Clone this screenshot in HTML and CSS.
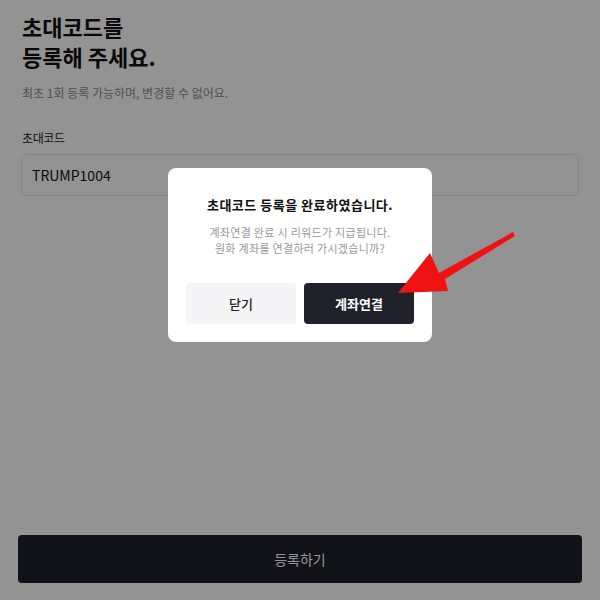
FILE: index.html
```html
<!DOCTYPE html>
<html>
	<head>
		<meta charset="utf-8">
		<title>초대코드 등록</title>
		<link rel="stylesheet" href="styles.css">
	</head>
	<body>

		<div class="page">
			<h1 class="page-title">초대코드를<br>등록해 주세요.</h1>
			<p class="page-desc">최초 1회 등록 가능하며, 변경할 수 없어요.</p>

			<label class="field-label">초대코드</label>
			<div class="field-input">TRUMP1004</div>

			<button class="submit-btn">등록하기</button>
		</div>

		<!-- 완료 팝업 -->
		<div class="dim">
			<div class="modal">
				<p class="modal-title">초대코드 등록을 완료하였습니다.</p>
				<p class="modal-desc">계좌연결 완료 시 리워드가 지급됩니다.<br>원화 계좌를 연결하러 가시겠습니까?</p>
				<div class="modal-btns">
					<button class="modal-btn modal-btn-close">닫기</button>
					<button class="modal-btn modal-btn-ok">계좌연결</button>
				</div>
			</div>
		</div>

		<svg class="arrow" width="600" height="600" viewBox="0 0 600 600">
			<polygon points="398,293 430,253 439,273 513,232 515,236 445,279 448,291" fill="#f01212"/>
		</svg>

	</body>
</html>
```

FILE: styles.css
```css
*{
	box-sizing: border-box;
}

body{
	margin: 0;
	background: #fff;
	font-family: "Noto Sans CJK KR", "Noto Sans", sans-serif;
	color: #111;
}

.page{
	display: flex;
	flex-direction: column;
	height: 600px;
	padding: 11px 18px 17px;
}

.page-title{
	margin: 0 0 0 4px;
	font-size: 22px;
	line-height: 30px;
	font-weight: 700;
}

.page-desc{
	margin: 13px 0 0 4px;
	font-size: 12px;
	line-height: 18px;
	color: #8e8e8e;
}

.field-label{
	margin: 27px 0 0 4px;
	font-size: 12px;
	line-height: 18px;
	color: #222;
	letter-spacing: -0.4px;
}

.field-input{
	margin: 7px 3px 0;
	height: 42px;
	padding: 0 10px;
	border: 1px solid #e8e8e8;
	border-radius: 5px;
	background: #fdfdfd;
	font-size: 14px;
	line-height: 40px;
	color: #111;
}

.submit-btn{
	margin-top: auto;
	height: 48px;
	border: 0;
	border-radius: 4px;
	background: #1f1f2b;
	color: #fff;
	font-family: inherit;
	font-size: 14px;
}

/* 딤 배경 */
.dim{
	position: fixed;
	top: 0;
	left: 0;
	right: 0;
	bottom: 0;
	display: flex;
	justify-content: center;
	align-items: flex-start;
	padding-top: 168px;
	background: rgba(0, 0, 0, 0.424);
}

.modal{
	width: 264px;
	padding: 27px 18px 18px;
	border-radius: 8px;
	background: #fff;
	text-align: center;
}

.modal-title{
	margin: 0;
	font-size: 13px;
	line-height: 20px;
	font-weight: 700;
	letter-spacing: 0.5px;
}

.modal-desc{
	margin: 9px 0 0;
	font-size: 11px;
	line-height: 16px;
	color: #999;
	letter-spacing: 0.3px;
}

.modal-btns{
	display: flex;
	gap: 8px;
	margin-top: 27px;
}

.modal-btn{
	flex: 1;
	height: 41px;
	border: 0;
	border-radius: 4px;
	font-family: inherit;
	font-size: 13px;
	font-weight: 700;
}

.modal-btn-close{
	background: #f5f5f7;
	color: #222;
	font-weight: 500;
}

.modal-btn-ok{
	background: #1f222b;
	color: #fff;
}

.arrow{
	position: fixed;
	top: 0;
	left: 0;
	pointer-events: none;
}
```
